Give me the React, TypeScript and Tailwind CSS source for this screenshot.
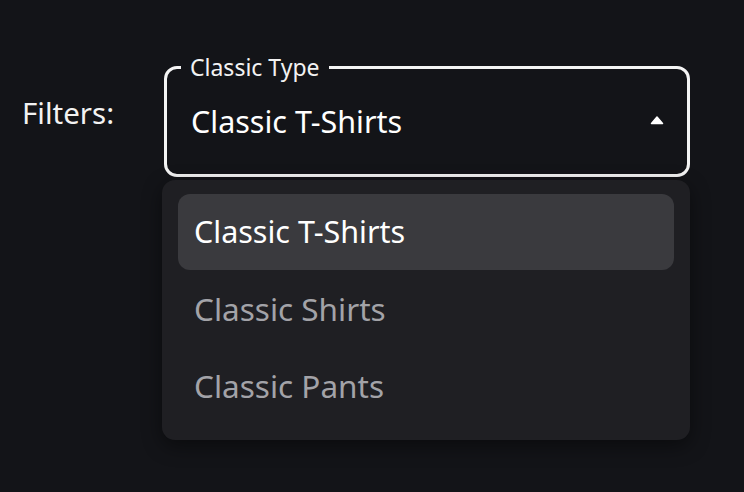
import React from "react";

export default function App() {
  const items = ["Classic T-Shirts", "Classic Shirts", "Classic Pants"];
  return (
    <div className="w-[744px] h-[492px] bg-[#131418] text-white overflow-hidden" style={{ fontFamily: '"Noto Sans", sans-serif' }}>
      <div className="flex pt-[56px] pl-[22px]">
        <div className="w-[142px] pt-[37px] text-[29.5px] leading-[40px] text-[#f2f2f2]">Filters:</div>
        <div className="flex flex-col w-[528px]">
          <fieldset className="w-[526px] h-[121px] border-[3px] border-[#f4f4f4] rounded-[13px] px-[14px] pb-0 m-0">
            <legend className="px-[9px] text-[23px] leading-[22px] text-[#f2f2f2]">Classic Type</legend>
            <div className="flex items-center justify-between h-[86px] pl-[10px] pr-[9px]">
              <span className="text-[30.5px] leading-[36px] text-white">Classic T-Shirts</span>
              <svg width="14" height="9" viewBox="0 0 14 9" className="mt-[-2px]">
                <path d="M7 1 L12.5 7.5 L1.5 7.5 Z" fill="white" stroke="white" strokeWidth="1.5" strokeLinejoin="round" />
              </svg>
            </div>
          </fieldset>
          <div className="mt-[3px] ml-[-2px] w-[528px] h-[260px] bg-[#1f1f23] rounded-[13px] shadow-[0_6px_20px_rgba(0,0,0,0.45)] pt-[14px] px-[16px] flex flex-col gap-[1px]">
            {items.map((t, i) => (
              <div
                key={t}
                className={
                  i === 0
                    ? "h-[76px] rounded-[12px] bg-[#3a3a3e] flex items-center px-[16px] text-[30.5px] text-white"
                    : "h-[76px] rounded-[12px] flex items-center px-[16px] text-[31.5px] text-[#a3a3a8]"
                }
              >
                {t}
              </div>
            ))}
          </div>
        </div>
      </div>
    </div>
  );
}
